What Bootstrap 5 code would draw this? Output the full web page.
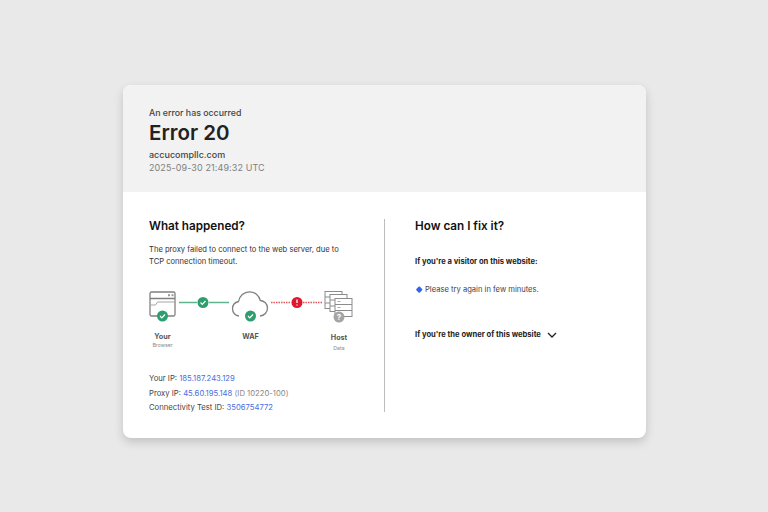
<!DOCTYPE html>
<html lang="en"><head><meta charset="utf-8"><title>Error 20</title>
<link href="https://cdn.jsdelivr.net/npm/bootstrap@5.3.0/dist/css/bootstrap.min.css" rel="stylesheet">
<style>
body{background:#e9e9e9;font-family:Inter,"Liberation Sans",sans-serif;color:#222}
.stage{height:512px;padding-top:85px}
.err-card{width:523px;height:353px;border-radius:8px;overflow:hidden;background:#fff;box-shadow:0 4px 10px rgba(0,0,0,.17)}
.err-head{height:107px;background:#f2f2f2;padding:21px 26.500px 0}
.h-sup{font-size:8.800px;line-height:13px;font-weight:500;color:#444}
.h-title{font-size:20.500px;line-height:24px;font-weight:600;color:#222;margin:2px 0 2.500px}
.h-dom{font-size:9px;line-height:13px;font-weight:500;color:#444}
.h-date{font-size:9px;line-height:13px;color:#808080;letter-spacing:.1px}
.err-body{height:246px;padding:27px 0 0 26.500px}
.col-a{width:234.500px}
.rule{width:1px;height:193px;background:#bdbdbd}
.col-b{padding-left:30.500px}
.sec-t{font-size:11.700px;line-height:15px;font-weight:600;color:#111;margin:0}
.desc{font-size:7.600px;line-height:11.500px;color:#333;margin:10px 0 0}
.diag{display:block;margin-top:24px}
.diag text{font-family:Inter,"Liberation Sans",sans-serif}
.meta{margin-top:9px;font-size:7.700px;line-height:14.600px;color:#444}
.meta a{color:#4a6ee0;text-decoration:none}
.meta .mut{color:#888}
.sub-t{font-size:7.600px;line-height:12px;font-weight:700;color:#222}
.sub-first{margin-top:22px}
.tip{font-size:7.600px;line-height:12px;color:#444;margin-top:16px}
.dot{width:4.500px;height:4.500px;background:#3563e9;transform:rotate(45deg);border-radius:1px;display:inline-block;margin:0 3.500px 1px 2px}
.own{margin-top:33px}
.chev{margin-left:6px}
</style></head>
<body>
<div class="stage d-flex justify-content-center align-items-start">
<div class="err-card">
 <div class="err-head">
  <div class="h-sup">An error has occurred</div>
  <div class="h-title">Error 20</div>
  <div class="h-dom">accucompllc.com</div>
  <div class="h-date">2025-09-30 21:49:32 UTC</div>
 </div>
 <div class="err-body d-flex">
  <div class="col-a">
   <h2 class="sec-t">What happened?</h2>
   <p class="desc">The proxy failed to connect to the web server, due to<br>TCP connection timeout.</p>
   <svg class="diag" width="210" height="72" viewBox="0 0 210 72" aria-hidden="true">
    <!-- browser -->
    <rect x="1" y="1" width="25" height="24" rx="1.500" fill="#fff" stroke="#808080" stroke-width="1.300"/>
    <path d="M1 7.500H26" stroke="#808080" stroke-width="1.300"/>
    <path d="M1.500 14h5l2-3h17" fill="none" stroke="#a5a5a5" stroke-width="1"/>
    <rect x="19" y="3.200" width="2" height="2" fill="#999"/><rect x="22.500" y="3.200" width="2" height="2" fill="#999"/>
    <circle cx="13.500" cy="25" r="5.500" fill="#2f9e6e"/><path d="M11 25l1.800 1.800 3.200-3.300" fill="none" stroke="#fff" stroke-width="1.200"/>
    <!-- line 1 -->
    <path d="M30 11.500H48M60 11.500H80" stroke="#5fb48e" stroke-width="1.300"/>
    <circle cx="54" cy="11.500" r="5.500" fill="#2f9e6e"/><path d="M51.500 11.500l1.800 1.800 3.200-3.300" fill="none" stroke="#fff" stroke-width="1.200"/>
    <!-- cloud -->
    <path d="M90 25c-3.700-.3-6.500-3.300-6.500-7.200 0-3.700 2.500-6.500 6-7.300C90.500 5 95 .8 100.500.8c5.300 0 9.600 3.600 10.800 8.700 3.900.3 7.200 3.400 7.200 7.500 0 4.300-3.200 7.600-7.500 8" fill="#fff" stroke="#808080" stroke-width="1.300"/>
    <circle cx="101.500" cy="25" r="5.500" fill="#2f9e6e"/><path d="M99 25l1.800 1.800 3.200-3.300" fill="none" stroke="#fff" stroke-width="1.200"/>
    <!-- line 2 -->
    <path d="M122 11.500H142M154 11.500H174" stroke="#e2555c" stroke-width="1.300" stroke-dasharray="1.500 1"/>
    <circle cx="148" cy="11.500" r="5.500" fill="#e0182d"/><path d="M148 8.500v3.600M148 13.500v1.100" stroke="#fff" stroke-width="1.300"/>
    <!-- servers -->
    <g fill="#fff" stroke="#8c8c8c" stroke-width="1">
     <rect x="176" y="0.500" width="17" height="17"/><path d="M176 6H193M176 12H193"/>
     <rect x="181" y="3.500" width="17" height="17"/><path d="M181 9H198M181 15H198"/>
     <rect x="186" y="7.500" width="17" height="18"/><path d="M186 13.500H203M186 19.500H203"/>
    </g>
    <g fill="#aaa"><rect x="188.500" y="10" width="3" height="1"/><rect x="188.500" y="16" width="3" height="1"/><rect x="188.500" y="22" width="3" height="1"/></g>
    <circle cx="190" cy="26" r="5.500" fill="#a5a5a5"/><text x="190" y="29" text-anchor="middle" font-size="8" font-weight="700" fill="#fff">?</text>
    <!-- labels -->
    <text x="13.500" y="48" text-anchor="middle" font-size="7.200" font-weight="700" fill="#555">Your</text>
    <text x="13.500" y="56" text-anchor="middle" font-size="5.200" fill="#888">Browser</text>
    <text x="101.500" y="48" text-anchor="middle" font-size="7.200" font-weight="700" fill="#555">WAF</text>
    <text x="190" y="49" text-anchor="middle" font-size="7.200" font-weight="700" fill="#555">Host</text>
    <text x="190" y="58.500" text-anchor="middle" font-size="5.200" fill="#888">Data</text>
   </svg>
   <div class="meta">
    <div>Your IP: <a href="#">185.187.243.129</a></div>
    <div>Proxy IP: <a href="#">45.60.195.148</a> <span class="mut">(ID 10220-100)</span></div>
    <div>Connectivity Test ID: <a href="#">3506754772</a></div>
   </div>
  </div>
  <div class="rule flex-shrink-0"></div>
  <div class="col-b flex-grow-1">
   <h2 class="sec-t">How can I fix it?</h2>
   <div class="sub-t sub-first">If you're a visitor on this website:</div>
   <div class="tip"><span class="dot"></span>Please try again in few minutes.</div>
   <div class="sub-t own d-flex align-items-center">If you're the owner of this website
    <svg class="chev" width="10" height="6" viewBox="0 0 10 6" aria-hidden="true"><path d="M1 1l4 4 4-4" fill="none" stroke="#222" stroke-width="1.300"/></svg>
   </div>
  </div>
 </div>
</div>
</div>
<script src="https://cdn.jsdelivr.net/npm/bootstrap@5.3.0/dist/js/bootstrap.bundle.min.js"></script>
</body></html>
